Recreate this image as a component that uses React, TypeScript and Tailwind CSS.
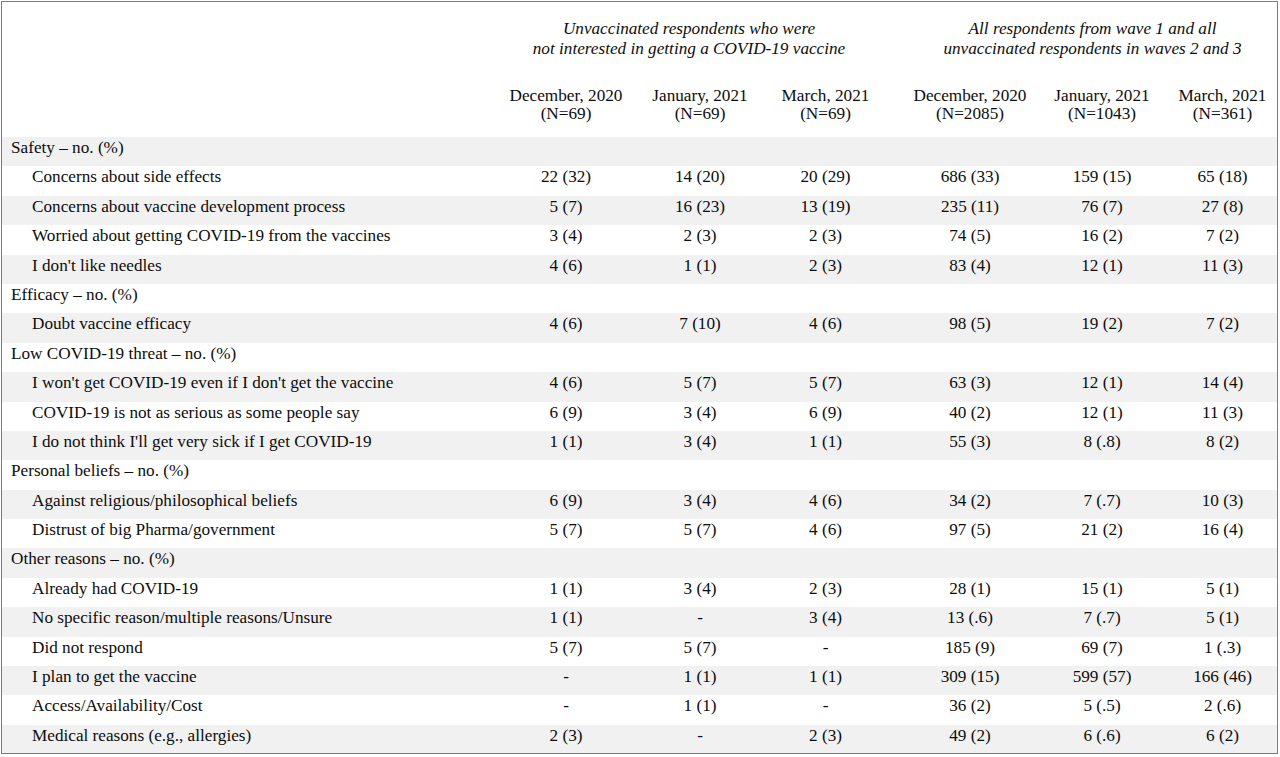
import React from 'react';

type Row = { label: string; cat?: boolean; vals?: string[] };

const rows: Row[] = [
  { label: 'Safety – no. (%)', cat: true },
  { label: 'Concerns about side effects', vals: ['22 (32)', '14 (20)', '20 (29)', '686 (33)', '159 (15)', '65 (18)'] },
  { label: 'Concerns about vaccine development process', vals: ['5 (7)', '16 (23)', '13 (19)', '235 (11)', '76 (7)', '27 (8)'] },
  { label: 'Worried about getting COVID-19 from the vaccines', vals: ['3 (4)', '2 (3)', '2 (3)', '74 (5)', '16 (2)', '7 (2)'] },
  { label: "I don't like needles", vals: ['4 (6)', '1 (1)', '2 (3)', '83 (4)', '12 (1)', '11 (3)'] },
  { label: 'Efficacy – no. (%)', cat: true },
  { label: 'Doubt vaccine efficacy', vals: ['4 (6)', '7 (10)', '4 (6)', '98 (5)', '19 (2)', '7 (2)'] },
  { label: 'Low COVID-19 threat – no. (%)', cat: true },
  { label: "I won't get COVID-19 even if I don't get the vaccine", vals: ['4 (6)', '5 (7)', '5 (7)', '63 (3)', '12 (1)', '14 (4)'] },
  { label: 'COVID-19 is not as serious as some people say', vals: ['6 (9)', '3 (4)', '6 (9)', '40 (2)', '12 (1)', '11 (3)'] },
  { label: "I do not think I'll get very sick if I get COVID-19", vals: ['1 (1)', '3 (4)', '1 (1)', '55 (3)', '8 (.8)', '8 (2)'] },
  { label: 'Personal beliefs – no. (%)', cat: true },
  { label: 'Against religious/philosophical beliefs', vals: ['6 (9)', '3 (4)', '4 (6)', '34 (2)', '7 (.7)', '10 (3)'] },
  { label: 'Distrust of big Pharma/government', vals: ['5 (7)', '5 (7)', '4 (6)', '97 (5)', '21 (2)', '16 (4)'] },
  { label: 'Other reasons – no. (%)', cat: true },
  { label: 'Already had COVID-19', vals: ['1 (1)', '3 (4)', '2 (3)', '28 (1)', '15 (1)', '5 (1)'] },
  { label: 'No specific reason/multiple reasons/Unsure', vals: ['1 (1)', '-', '3 (4)', '13 (.6)', '7 (.7)', '5 (1)'] },
  { label: 'Did not respond', vals: ['5 (7)', '5 (7)', '-', '185 (9)', '69 (7)', '1 (.3)'] },
  { label: 'I plan to get the vaccine', vals: ['-', '1 (1)', '1 (1)', '309 (15)', '599 (57)', '166 (46)'] },
  { label: 'Access/Availability/Cost', vals: ['-', '1 (1)', '-', '36 (2)', '5 (.5)', '2 (.6)'] },
  { label: 'Medical reasons (e.g., allergies)', vals: ['2 (3)', '-', '2 (3)', '49 (2)', '6 (.6)', '6 (2)'] },
];

const columns = [
  ['December, 2020', '(N=69)'],
  ['January, 2021', '(N=69)'],
  ['March, 2021', '(N=69)'],
  ['December, 2020', '(N=2085)'],
  ['January, 2021', '(N=1043)'],
  ['March, 2021', '(N=361)'],
];

// small nudges so each column's text sits where the reference puts it
const colPad = ['', '', 'pr-[6px]', '', 'pr-[6px]', 'pl-[8px]'];

const grid = 'grid grid-cols-[497px_134px_134px_123px_160px_110px_117px]';

const App: React.FC = () => {
  return (
    <div className="bg-white w-[1280px] h-[757px] pt-px pl-px font-['Liberation_Serif',serif] text-[17.2px] text-[#0d0d0d]">
      <div className="w-[1277px] h-[753px] border border-[#7c7c7c] overflow-hidden">
        <div className={`${grid} content-start h-[135px] pt-[17px]`}>
          <div />
          <div className="col-span-3 pr-[11px] text-center italic leading-[19.5px]">
            Unvaccinated respondents who were
            <br />
            not interested in getting a COVID-19 vaccine
          </div>
          <div className="col-span-3 pl-[18px] text-center italic leading-[19.5px]">
            All respondents from wave 1 and all
            <br />
            unvaccinated respondents in waves 2 and 3
          </div>
          <div className="h-[29px] col-span-7" />
          <div />
          {columns.map((c, i) => (
            <div key={i} className={`text-center leading-[18px] ${colPad[i]}`}>
              {c[0]}
              <br />
              {c[1]}
            </div>
          ))}
        </div>
        {rows.map((r, i) => (
          <div
            key={i}
            className={`${grid} h-[29.4px] leading-[18px] pt-[2px] ${i % 2 === 0 ? 'bg-[#f1f1f1]' : 'bg-white'}`}
          >
            <div className={r.cat ? 'pl-[9px]' : 'pl-[30px]'}>{r.label}</div>
            {(r.vals ?? ['', '', '', '', '', '']).map((v, j) => (
              <div key={j} className={`text-center ${colPad[j]}`}>
                {v}
              </div>
            ))}
          </div>
        ))}
      </div>
    </div>
  );
};

export default App;
